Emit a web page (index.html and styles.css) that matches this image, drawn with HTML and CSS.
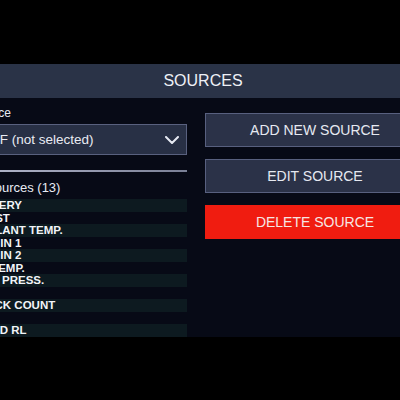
FILE: index.html
```html
<!DOCTYPE html>
<html>
<head>
<meta charset="utf-8">
<link rel="stylesheet" href="styles.css">
</head>
<body>
<div class="screen">
  <div class="header">SOURCES</div>
  <div class="content">
    <div class="left">
      <div class="label">Source</div>
      <div class="dropdown">
        <span>OFF (not selected)</span>
        <svg class="chev" width="14" height="8" viewBox="0 0 14 8"><path d="M1 1 L7 7 L13 1" fill="none" stroke="#e6e9f2" stroke-width="2" stroke-linecap="round" stroke-linejoin="round"/></svg>
      </div>
      <div class="divider"></div>
      <div class="list-title">Sources (13)</div>
      <div class="list">
        <div class="row alt">BATTERY</div>
        <div class="row">BOOST</div>
        <div class="row alt">COOLANT TEMP.</div>
        <div class="row">PWM IN 1</div>
        <div class="row alt">PWM IN 2</div>
        <div class="row">OIL TEMP.</div>
        <div class="row alt">FUEL PRESS.</div>
        <div class="row">RPM</div>
        <div class="row alt">KNOCK COUNT</div>
        <div class="row">TPS</div>
        <div class="row alt">SPEED RL</div>
      </div>
    </div>
    <div class="right">
      <div class="btn">ADD NEW SOURCE</div>
      <div class="btn">EDIT SOURCE</div>
      <div class="btn danger">DELETE SOURCE</div>
    </div>
  </div>
</div>
</body>
</html>
```

FILE: styles.css
```css
html, body {
  margin: 0;
  padding: 0;
  background: #000;
  overflow: hidden;
}
body {
  width: 400px;
  height: 400px;
  font-family: "Liberation Sans", Arial, sans-serif;
  color: #e8ebf3;
}
.screen {
  margin-top: 64px;
  margin-left: -40px;
  width: 486px;
  height: 273px;
  background: #070a16;
  overflow: hidden;
}
.header {
  height: 34px;
  background: #2a3347;
  display: flex;
  align-items: center;
  justify-content: center;
  font-size: 16px;
  color: #eef0f6;
}
.content {
  display: flex;
  gap: 18px;
  padding-left: 8px;
}
.left {
  width: 219px;
  display: flex;
  flex-direction: column;
  padding-top: 8px;
}
.label {
  font-size: 12px;
  line-height: 14px;
  padding-left: 5px;
  margin-bottom: 4px;
}
.dropdown {
  margin-left: 6px;
  height: 31px;
  box-sizing: border-box;
  border: 1px solid #59617f;
  background: #283045;
  display: flex;
  align-items: center;
  justify-content: space-between;
  padding: 0 7px 0 6px;
  font-size: 13.5px;
}
.chev {
  display: block;
}
.divider {
  margin-top: 15px;
  margin-left: 6px;
  height: 2px;
  background: linear-gradient(to right, #b4b8cc, #7a8096);
}
.list-title {
  margin-top: 8px;
  font-size: 13px;
  line-height: 16px;
  padding-left: 18px;
}
.list {
  margin-top: 3px;
  display: flex;
  flex-direction: column;
}
.row {
  height: 12.5px;
  line-height: 12.5px;
  font-size: 11.5px;
  font-weight: bold;
  padding-left: 1px;
  color: #f2f4f8;
  white-space: nowrap;
}
.row.alt {
  background: #0d1a20;
}
.right {
  width: 220px;
  padding-top: 15px;
  display: flex;
  flex-direction: column;
  gap: 12px;
}
.btn {
  height: 34px;
  box-sizing: border-box;
  border: 1px solid #58607f;
  background: #2b3248;
  display: flex;
  align-items: center;
  justify-content: center;
  font-size: 14px;
  color: #e6e9f1;
}
.btn.danger {
  background: #f01c10;
  border-color: #f01c10;
  color: #f6e6e4;
}
```
